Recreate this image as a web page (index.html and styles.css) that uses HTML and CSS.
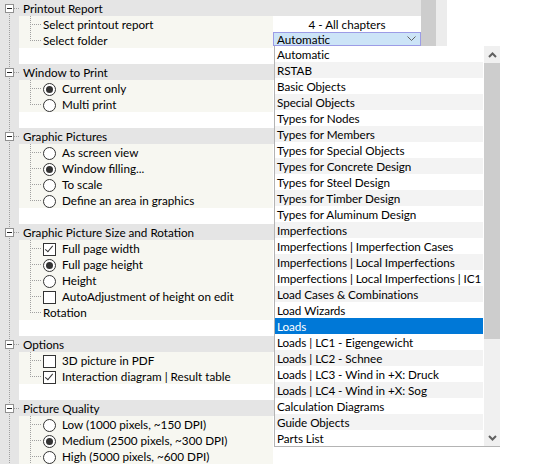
FILE: index.html
```html
<!doctype html>
<html lang="en">
<head>
	<meta charset="UTF-8">
	<title>Printout properties</title>
	<link rel="stylesheet" href="styles.css">
</head>
<body>
	<div class="page">
		<div class="grid">
			<!-- Printout Report -->
			<div class="row head first"><span class="gut"><span class="toggle"></span></span><span class="title">Printout Report</span></div>
			<div class="row item"><span class="gut"></span><span class="name"><span class="branch"></span>Select printout report</span><span class="value center">4 - All chapters</span></div>
			<div class="row item last"><span class="gut"></span><span class="name"><span class="branch"></span>Select folder</span><span class="value"><span class="combo"><span>Automatic</span><svg width="9" height="6" viewBox="0 0 9 6"><polyline points="0.5,0.5 4.5,4.5 8.5,0.5" fill="none" stroke="#606060" stroke-width="1"/></svg></span></span></div>
			<div class="row blank"><span class="gut"></span></div>

			<!-- Window to Print -->
			<div class="row head"><span class="gut"><span class="toggle"></span></span><span class="title">Window to Print</span></div>
			<div class="row item"><span class="gut"></span><span class="name"><span class="branch"></span><span class="radio on"></span><span class="label">Current only</span></span><span class="value"></span></div>
			<div class="row item last"><span class="gut"></span><span class="name"><span class="branch"></span><span class="radio"></span><span class="label">Multi print</span></span><span class="value"></span></div>
			<div class="row blank"><span class="gut"></span></div>

			<!-- Graphic Pictures -->
			<div class="row head"><span class="gut"><span class="toggle"></span></span><span class="title">Graphic Pictures</span></div>
			<div class="row item"><span class="gut"></span><span class="name"><span class="branch"></span><span class="radio"></span><span class="label">As screen view</span></span><span class="value"></span></div>
			<div class="row item"><span class="gut"></span><span class="name"><span class="branch"></span><span class="radio on"></span><span class="label">Window filling...</span></span><span class="value"></span></div>
			<div class="row item"><span class="gut"></span><span class="name"><span class="branch"></span><span class="radio"></span><span class="label">To scale</span></span><span class="value"></span></div>
			<div class="row item last"><span class="gut"></span><span class="name"><span class="branch"></span><span class="radio"></span><span class="label">Define an area in graphics</span></span><span class="value"></span></div>
			<div class="row blank"><span class="gut"></span></div>

			<!-- Graphic Picture Size and Rotation -->
			<div class="row head"><span class="gut"><span class="toggle"></span></span><span class="title">Graphic Picture Size and Rotation</span></div>
			<div class="row item"><span class="gut"></span><span class="name"><span class="branch"></span><span class="check on"></span><span class="label">Full page width</span></span><span class="value"></span></div>
			<div class="row item"><span class="gut"></span><span class="name"><span class="branch"></span><span class="radio on"></span><span class="label">Full page height</span></span><span class="value"></span></div>
			<div class="row item"><span class="gut"></span><span class="name"><span class="branch"></span><span class="radio"></span><span class="label">Height</span></span><span class="value"></span></div>
			<div class="row item"><span class="gut"></span><span class="name"><span class="branch"></span><span class="check"></span><span class="label">AutoAdjustment of height on edit</span></span><span class="value"></span></div>
			<div class="row item last"><span class="gut"></span><span class="name"><span class="branch"></span>Rotation</span><span class="value"></span></div>
			<div class="row blank"><span class="gut"></span></div>

			<!-- Options -->
			<div class="row head"><span class="gut"><span class="toggle"></span></span><span class="title">Options</span></div>
			<div class="row item"><span class="gut"></span><span class="name"><span class="branch"></span><span class="check"></span><span class="label">3D picture in PDF</span></span><span class="value"></span></div>
			<div class="row item last"><span class="gut"></span><span class="name"><span class="branch"></span><span class="check on"></span><span class="label">Interaction diagram | Result table</span></span><span class="value"></span></div>
			<div class="row blank"><span class="gut"></span></div>

			<!-- Picture Quality -->
			<div class="row head"><span class="gut"><span class="toggle"></span></span><span class="title">Picture Quality</span></div>
			<div class="row item"><span class="gut"></span><span class="name"><span class="branch"></span><span class="radio"></span><span class="label">Low (1000 pixels, ~150 DPI)</span></span><span class="value"></span></div>
			<div class="row item"><span class="gut"></span><span class="name"><span class="branch"></span><span class="radio on"></span><span class="label">Medium (2500 pixels, ~300 DPI)</span></span><span class="value"></span></div>
			<div class="row item"><span class="gut"></span><span class="name"><span class="branch"></span><span class="radio"></span><span class="label">High (5000 pixels, ~600 DPI)</span></span><span class="value"></span></div>
		</div>

		<div class="side"><span class="side-thumb"></span><span class="side-track"></span></div>

		<!-- open list of the "Select folder" combo -->
		<div class="dropdown">
			<ul class="options">
				<li>Automatic</li>
				<li>RSTAB</li>
				<li>Basic Objects</li>
				<li>Special Objects</li>
				<li>Types for Nodes</li>
				<li>Types for Members</li>
				<li>Types for Special Objects</li>
				<li>Types for Concrete Design</li>
				<li>Types for Steel Design</li>
				<li>Types for Timber Design</li>
				<li>Types for Aluminum Design</li>
				<li>Imperfections</li>
				<li>Imperfections | Imperfection Cases</li>
				<li>Imperfections | Local Imperfections</li>
				<li>Imperfections | Local Imperfections | IC1</li>
				<li>Load Cases &amp; Combinations</li>
				<li>Load Wizards</li>
				<li class="selected">Loads</li>
				<li>Loads | LC1 - Eigengewicht</li>
				<li>Loads | LC2 - Schnee</li>
				<li>Loads | LC3 - Wind in +X: Druck</li>
				<li>Loads | LC4 - Wind in +X: Sog</li>
				<li>Calculation Diagrams</li>
				<li>Guide Objects</li>
				<li>Parts List</li>
			</ul>
			<div class="scrollbar">
				<span class="arrow"><svg width="9" height="6" viewBox="0 0 9 6"><polyline points="1,5 4.5,1.5 8,5" fill="none" stroke="#606060" stroke-width="2"/></svg></span>
				<span class="thumb"></span>
				<span class="track"></span>
				<span class="arrow"><svg width="9" height="6" viewBox="0 0 9 6"><polyline points="1,1 4.5,4.5 8,1" fill="none" stroke="#606060" stroke-width="2"/></svg></span>
			</div>
		</div>
	</div>
</body>
</html>
```

FILE: styles.css
```css
body {
	margin: 0;
	padding: 0;
	background: #fff;
	font: 11.7px/17px Lato, "Liberation Sans", sans-serif;
	color: #000;
}
ul {
	margin: 0;
	padding: 0;
	list-style-type: none;
}
.page {
	position: relative;
	display: flex;
	align-items: flex-start;
	width: 554px;
	height: 465px;
	overflow: hidden;
}
/* property grid */
.grid {
	width: 421px;
	flex: none;
}
.row {
	display: flex;
	height: 16px;
	white-space: nowrap;
}
.gut {
	flex: none;
	display: flex;
	width: 19px;
	height: 16px;
	background-color: #e5e5e5;
	background-image: repeating-linear-gradient(to bottom, #a0a0a0 0 1px, transparent 1px 2px);
	background-size: 1px 16px;
	background-position: 9px 0;
	background-repeat: no-repeat;
}
.head {
	background: #e5e5e5;
}
.head .gut {
	background-image: repeating-linear-gradient(to bottom, #a0a0a0 0 1px, transparent 1px 2px),
		repeating-linear-gradient(to right, #a0a0a0 0 1px, transparent 1px 2px);
	background-size: 1px 16px, 6px 1px;
	background-position: 9px 0, 14px 8px;
}
.first .gut {
	background-size: 1px 16px, 6px 1px;
	background-position: 9px 12px, 14px 8px;
}
.toggle {
	position: relative;
	width: 9px;
	height: 9px;
	margin: 4px 0 0 5px;
	box-sizing: border-box;
	border: 1px solid #909090;
	background: #fff;
}
.toggle:after {
	content: "";
	position: absolute;
	left: 1px;
	top: 3px;
	width: 5px;
	height: 1px;
	background: #222;
}
.title {
	padding-left: 4px;
}
.name {
	flex: none;
	display: flex;
	width: 254px;
	background: #f7f7f1;
}
.value {
	flex: 1;
	min-width: 0;
	background: #fff;
}
.center {
	text-align: center;
}
.blank {
	background: #fff;
}
/* tree branch lines of the children */
.branch {
	flex: none;
	width: 24px;
	height: 16px;
	background-image: repeating-linear-gradient(to bottom, #a0a0a0 0 1px, transparent 1px 2px),
		repeating-linear-gradient(to right, #a0a0a0 0 1px, transparent 1px 2px);
	background-size: 1px 16px, 11px 1px;
	background-position: 11px 0, 11px 8px;
	background-repeat: no-repeat;
}
.last .branch {
	background-size: 1px 8px, 11px 1px;
}
.radio, .check {
	position: relative;
	flex: none;
	width: 13px;
	height: 13px;
	margin-top: 3px;
	box-sizing: border-box;
	border: 1px solid #333;
	background: #fff;
}
.radio {
	border-radius: 50%;
}
.radio.on:after {
	content: "";
	position: absolute;
	left: 2px;
	top: 2px;
	width: 7px;
	height: 7px;
	border-radius: 50%;
	background: #333;
}
.check.on:after {
	content: "";
	position: absolute;
	left: 3px;
	top: 0;
	width: 3px;
	height: 7px;
	border: solid #333;
	border-width: 0 1px 1px 0;
	transform: rotate(40deg);
}
.label {
	padding-left: 6px;
}
/* combo box in the value column */
.combo {
	display: flex;
	justify-content: space-between;
	align-items: center;
	height: 14px;
	padding: 0 4px 0 3px;
	box-sizing: border-box;
	border: 1px solid #9c9ce6;
	background: #cce4f7;
	line-height: 12px;
	overflow: hidden;
}
/* right side strip */
.side {
	flex: none;
	display: flex;
	height: 46px;
}
.side-thumb {
	width: 15px;
	background: #cdcdcd;
}
.side-track {
	width: 11px;
	background: #ececec;
}
/* open drop down list */
.dropdown {
	position: absolute;
	left: 274px;
	top: 46px;
	display: flex;
	width: 226px;
	border-left: 1px solid #b4b4b4;
	border-bottom: 1px solid #b4b4b4;
	box-sizing: border-box;
	background: #fff;
}
.options {
	flex: 1;
	min-width: 0;
	padding-right: 1px;
}
.options li {
	height: 16px;
	padding-left: 2px;
	white-space: nowrap;
	overflow: hidden;
	letter-spacing: -0.05px;
}
.options li:nth-child(even) {
	background: #f3f3f3;
}
.options li.selected {
	background: #0078d7;
	color: #fff;
}
.scrollbar {
	flex: none;
	display: flex;
	flex-direction: column;
	width: 16px;
	height: 400px;
	background: #f0f0f0;
}
.arrow {
	display: flex;
	justify-content: center;
	align-items: center;
	height: 17px;
}
.thumb {
	height: 276px;
	background: #cdcdcd;
}
.track {
	flex: 1;
}
```
